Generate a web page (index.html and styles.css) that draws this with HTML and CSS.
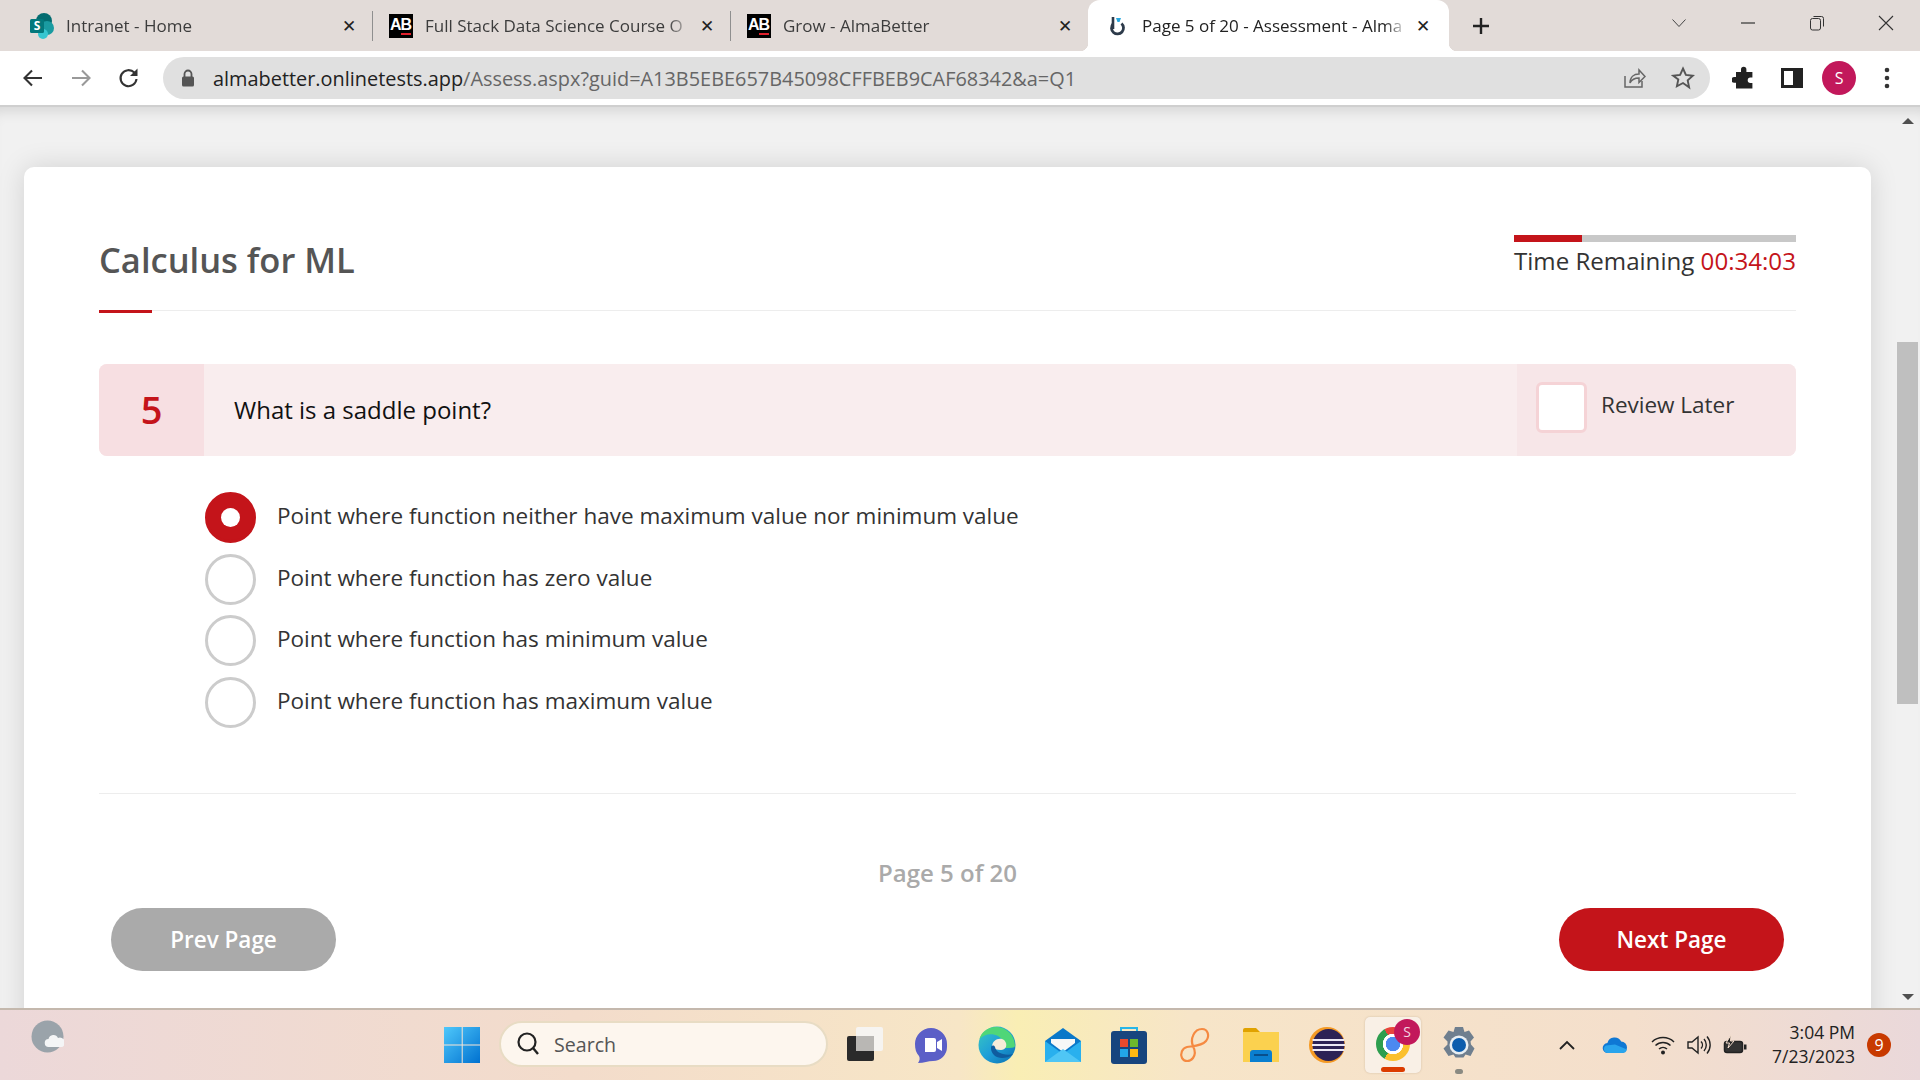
FILE: index.html
```html
<!DOCTYPE html>
<html lang="en">
<head>
  <meta charset="UTF-8">
  <title>Page 5 of 20 - Assessment - AlmaBetter</title>
  <link rel="stylesheet" href="styles.css">
</head>
<body>

  <!-- Browser tabs -->
  <div class="tabstrip">
    <div class="tab">
      <svg class="fav-sp" width="26" height="26" viewBox="0 0 26 26">
        <circle cx="15" cy="8" r="8" fill="#036c70"/>
        <circle cx="18" cy="15" r="7" fill="#1a9ba1"/>
        <circle cx="14" cy="21" r="5" fill="#37c6d0"/>
        <rect x="1" y="6" width="14" height="14" rx="1.5" fill="#03787c"/>
        <text x="8" y="17" text-anchor="middle" class="fav-sp-text">S</text>
      </svg>
      <span class="tab-title">Intranet - Home</span>
      <span class="tab-close">✕</span>
    </div>
    <div class="tab-sep"></div>
    <div class="tab">
      <span class="fav-ab">AB<i></i></span>
      <span class="tab-title">Full Stack Data Science Course O</span>
      <span class="tab-close">✕</span>
    </div>
    <div class="tab-sep"></div>
    <div class="tab">
      <span class="fav-ab">AB<i></i></span>
      <span class="tab-title">Grow - AlmaBetter</span>
      <span class="tab-close">✕</span>
    </div>
    <div class="tab active">
      <svg class="fav-grow" width="18" height="22" viewBox="0 0 18 22">
        <path d="M4 2v12" stroke="#2d3a4a" stroke-width="2.6" fill="none"/>
        <path d="M4 9a6 6 0 1 0 8.5 -.5" stroke="#2d3a4a" stroke-width="2.8" fill="none"/>
        <path d="M7 3h5l-1.5 4h-2z" fill="#29a8e0"/>
      </svg>
      <span class="tab-title">Page 5 of 20 - Assessment - Alma</span>
      <span class="tab-close">✕</span>
    </div>
    <div class="new-tab">
      <svg width="20" height="20" viewBox="0 0 20 20"><path d="M10 2v16M2 10h16" stroke="#222" stroke-width="2.4"/></svg>
    </div>
    <div class="win-controls">
      <div class="win-btn"><svg width="16" height="10" viewBox="0 0 16 10"><path d="M1.5 1.5L8 8.5l6.5-7" fill="none" stroke="#444" stroke-width="1"/></svg></div>
      <div class="win-btn"><svg width="14" height="2" viewBox="0 0 14 2"><path d="M0 1h14" stroke="#333" stroke-width="1.2"/></svg></div>
      <div class="win-btn"><svg width="16" height="16" viewBox="0 0 16 16"><rect x="1.5" y="3.5" width="10" height="11.5" rx="2" fill="none" stroke="#333"/><path d="M4.5 1.5h8a2 2 0 0 1 2 2v8" fill="none" stroke="#333"/></svg></div>
      <div class="win-btn"><svg width="16" height="16" viewBox="0 0 16 16"><path d="M1 1l14 14M15 1L1 15" stroke="#333" stroke-width="1.1"/></svg></div>
    </div>
  </div>

  <!-- Address bar -->
  <div class="toolbar">
    <div class="tool-btn"><svg width="22" height="20" viewBox="0 0 22 20"><path d="M20 10H3M10 2.5L2.5 10l7.5 7.5" fill="none" stroke="#333" stroke-width="2.1"/></svg></div>
    <div class="tool-btn"><svg width="22" height="20" viewBox="0 0 22 20"><path d="M2 10h17M12 2.5l7.5 7.5-7.5 7.5" fill="none" stroke="#999" stroke-width="2.1"/></svg></div>
    <div class="tool-btn"><svg width="22" height="22" viewBox="0 0 22 22"><path d="M18.5 12a8 8 0 1 1-2.2-6.4" fill="none" stroke="#333" stroke-width="2.1"/><path d="M19.5 1.5v7.5h-7.5z" fill="#333"/></svg></div>
    <div class="omnibox">
      <svg class="lock" width="14" height="18" viewBox="0 0 14 18"><path d="M3.5 8V5a3.5 3.5 0 0 1 7 0v3" fill="none" stroke="#555" stroke-width="1.8"/><rect x="1" y="7.5" width="12" height="10" rx="1.5" fill="#555"/></svg>
      <span class="url"><span class="url-host">almabetter.onlinetests.app</span>/Assess.aspx?guid=A13B5EBE657B45098CFFBEB9CAF68342&amp;a=Q1</span>
      <svg class="omni-share" width="24" height="24" viewBox="0 0 24 24"><path d="M3 10v11h17v-6" fill="none" stroke="#666" stroke-width="1.5"/><path d="M8 17c0-6 4-9 9-9V4l6 6.5-6 6V12c-4 0-7 1-9 5z" fill="none" stroke="#666" stroke-width="1.5"/></svg>
      <svg class="omni-star" width="24" height="24" viewBox="0 0 24 24"><path d="M12 2.5l2.9 6.4 7 .8-5.2 4.7 1.4 6.9L12 17l-6.1 3.3 1.4-6.9L2.100 9.700l7-.8z" fill="none" stroke="#555" stroke-width="1.9"/></svg>
    </div>
    <div class="tool-right">
      <div class="tool-btn"><svg width="24" height="24" viewBox="0 0 24 24"><path d="M9 3.500a2.700 2.700 0 0 1 5.400 0V6h6v5.500h-2a2.700 2.700 0 0 0 0 5.400h2v5.600H4v-5.800H2.200a2.800 2.800 0 0 1 0-5.600H4V6h5z" fill="#222"/></svg></div>
      <div class="tool-btn"><svg width="22" height="20" viewBox="0 0 22 20"><rect x="1.500" y="1.500" width="19" height="17" fill="none" stroke="#222" stroke-width="3"/><rect x="12" y="1.500" width="8" height="17" fill="#222"/></svg></div>
      <div class="tool-btn"><span class="avatar">S</span></div>
      <div class="tool-btn"><svg width="6" height="22" viewBox="0 0 6 22"><circle cx="3" cy="3" r="2.300" fill="#333"/><circle cx="3" cy="11" r="2.300" fill="#333"/><circle cx="3" cy="19" r="2.300" fill="#333"/></svg></div>
    </div>
  </div>

  <!-- Page viewport -->
  <div class="viewport">
    <div class="page">
      <div class="card">

        <div class="card-head">
          <h1 class="test-title">Calculus for ML</h1>
          <div class="timer">
            <div class="timer-bar"><div class="timer-fill"></div></div>
            <div class="timer-text">Time Remaining <span class="timer-value">00:34:03</span></div>
          </div>
        </div>
        <div class="head-rule"><span></span></div>

        <div class="question">
          <div class="question-num">5</div>
          <div class="question-text">What is a saddle point?</div>
          <div class="review">
            <span class="review-box"></span>
            <span class="review-label">Review Later</span>
          </div>
        </div>

        <div class="options">
          <div class="option selected"><span class="radio"></span><span class="option-label">Point where function neither have maximum value nor minimum value</span></div>
          <div class="option"><span class="radio"></span><span class="option-label">Point where function has zero value</span></div>
          <div class="option"><span class="radio"></span><span class="option-label">Point where function has minimum value</span></div>
          <div class="option"><span class="radio"></span><span class="option-label">Point where function has maximum value</span></div>
        </div>

        <div class="card-rule"></div>
        <div class="page-count">Page 5 of 20</div>
        <div class="pager">
          <button class="pager-btn prev">Prev Page</button>
          <button class="pager-btn next">Next Page</button>
        </div>

      </div>
    </div>

    <div class="scrollbar">
      <span class="arrow-up"></span>
      <div class="scroll-thumb"></div>
      <span class="arrow-down"></span>
    </div>
  </div>

  <!-- Windows taskbar -->
  <div class="taskbar">
    <svg class="weather" width="33" height="33" viewBox="0 0 33 33">
      <circle cx="16.500" cy="16.500" r="16" fill="#9aa3aa"/>
      <path d="M18 27a4 4 0 0 1-.5-8 5 5 0 0 1 9.500-1 4.500 4.500 0 0 1 4 9z" fill="#f4f5f6"/>
    </svg>

    <div class="task-slot win-logo">
      <svg width="36" height="36" viewBox="0 0 36 36">
        <defs><linearGradient id="winblue" x1="0" y1="0" x2="1" y2="1"><stop offset="0" stop-color="#4fc8fb"/><stop offset="1" stop-color="#0071d0"/></linearGradient></defs>
        <rect width="36" height="36" fill="url(#winblue)"/>
        <path d="M17.700 0h1v36h-1zM0 17.500h36v1H0z" fill="#f7e6d6"/>
      </svg>
    </div>

    <div class="task-search">
      <svg width="24" height="26" viewBox="0 0 24 26"><circle cx="11" cy="11" r="8.500" fill="none" stroke="#222" stroke-width="2.200"/><path d="M17 17l5 6" stroke="#222" stroke-width="2.400"/></svg>
      <span>Search</span>
    </div>

    <div class="task-apps">
      <div class="task-slot">
        <svg width="36" height="36" viewBox="0 0 36 36"><rect x="0" y="9" width="27" height="25" rx="2" fill="#2a2a2a"/><rect x="9" y="0" width="27" height="24" rx="2" fill="#f6f4f1"/><rect x="9" y="9" width="18" height="15" fill="#b9b7b4"/></svg>
      </div>
      <div class="task-slot">
        <svg width="34" height="36" viewBox="0 0 34 36"><path d="M17 1a16 16 0 0 1 16 16v3a14 14 0 0 1-14 14c-5 0-9 2-15 2 2-3 2-5 1-7C2 26 1 22 1 17A16 16 0 0 1 17 1z" fill="#5b5fc7"/><path d="M11 11h9a2 2 0 0 1 2 2v10a2 2 0 0 1-2 2h-9z" fill="#fff"/><path d="M23 15l5-3v12l-5-3z" fill="#fff"/></svg>
      </div>
      <div class="task-slot">
        <svg width="38" height="38" viewBox="0 0 38 38">
          <defs><linearGradient id="edgeg" x1="0" y1="0" x2="1" y2="1"><stop offset="0" stop-color="#39c9c0"/><stop offset=".5" stop-color="#1f9fd8"/><stop offset="1" stop-color="#0a6fb0"/></linearGradient></defs>
          <circle cx="19" cy="19" r="18.500" fill="url(#edgeg)"/>
          <path d="M37 20c0-10-8-19-19-19C9 1 3 7 1.500 13 6 8 14 7 20 10c5 3 7 8 4 12h7c4 0 6-1 6-2z" fill="#4fd678"/>
          <path d="M14 21c0-6 5-9 10-8 3 1 5 4 4 8-1 2-3 3-5 3-4 0-7-1-9-3z" fill="#f7ecd9"/>
          <path d="M13 22c0 6 5 10 11 10 4 0 8-1 11-4-3 1-7 1-10 0-4-1-7-3-8-7-1-2-4-2-4 1z" fill="#0f5c9f"/>
        </svg>
      </div>
      <div class="task-slot">
        <svg width="36" height="34" viewBox="0 0 36 34"><path d="M18 0l18 13v21H0V13z" fill="#0a78c9"/><path d="M0 13l18 13 18-13v21H0z" fill="#29b0ee"/><path d="M6 11h24v4L18 24 6 15z" fill="#f7f7f7"/><path d="M0 34l18-13 18 13z" fill="#4fc6f5"/></svg>
      </div>
      <div class="task-slot">
        <svg width="36" height="38" viewBox="0 0 36 38"><path d="M10 7V2h16v5" fill="none" stroke="#27b6e8" stroke-width="2"/><rect y="5" width="36" height="33" rx="3" fill="#17457e"/><rect x="9" y="13" width="8" height="8" fill="#e8492d"/><rect x="19" y="13" width="8" height="8" fill="#6cb82c"/><rect x="9" y="23" width="8" height="8" fill="#22a6e8"/><rect x="19" y="23" width="8" height="8" fill="#fdb813"/></svg>
      </div>
      <div class="task-slot">
        <svg width="32" height="36" viewBox="0 0 32 36"><path d="M14 19C11 12 15 2 23 2c6 0 8 7 4 12-4 5-13 5-19 6-5 1-7 7-5 11 2 4 8 4 11 0 3-4 2-8 0-12z" fill="none" stroke="#f58a42" stroke-width="2.200"/></svg>
      </div>
      <div class="task-slot">
        <svg width="36" height="34" viewBox="0 0 36 34"><path d="M0 2a2 2 0 0 1 2-2h11l4 4H0z" fill="#e0a200"/><rect y="4" width="36" height="30" fill="#fbd14f"/><path d="M7 34v-9a3 3 0 0 1 3-3h16a3 3 0 0 1 3 3v9z" fill="#0a7fd0"/><rect x="11" y="26" width="14" height="2" fill="#084f8c"/></svg>
      </div>
      <div class="task-slot">
        <svg width="36" height="36" viewBox="0 0 36 36"><circle cx="18" cy="18" r="18" fill="#f59a23"/><circle cx="19.500" cy="18" r="16" fill="#2c2255"/><path d="M3.500 12h32v2h-32zM3 17h33v2H3zM3.500 22h32v2h-32z" fill="#ece9f5"/></svg>
      </div>
      <div class="task-slot running">
        <span class="chrome-logo"></span>
        <span class="chrome-badge">S</span>
        <span class="running-bar"></span>
      </div>
      <div class="task-slot">
        <svg width="36" height="38" viewBox="0 0 36 38"><path d="M14 1h8l1.500 5 4.500-1.500 5 7-3.500 4 .5 3 3.500 4-4 7.500-5-1.500-2 3-8 0-2-3-5 1.500-5-7.500 4-4v-3l-4-4 5-7 5 1.500z" fill="#6f7f8f"/><circle cx="18" cy="19" r="9.500" fill="#e8eef2"/><circle cx="18" cy="19" r="7" fill="#0b5cad"/></svg>
        <span class="open-dot"></span>
      </div>
    </div>

    <div class="tray">
      <div class="tray-slot wide"><svg width="18" height="10" viewBox="0 0 18 10"><path d="M2 9l7-7 7 7" fill="none" stroke="#222" stroke-width="1.800"/></svg></div>
      <div class="tray-slot wide"><svg width="26" height="17" viewBox="0 0 26 17"><path d="M6 16a5 5 0 0 1-.6-10 7.500 7.500 0 0 1 13.800-1.500A6 6 0 0 1 25 10.500 5.500 5.500 0 0 1 20 16z" fill="#0f78d4"/><path d="M6 16a4 4 0 0 1-2-7.500l9-1 12 5a5 5 0 0 1-5 3.500z" fill="#29a4ec"/></svg></div>
      <div class="tray-slot first-sys"><svg width="24" height="20" viewBox="0 0 24 20"><path d="M1 7a16 16 0 0 1 22 0M4.500 10.500a11 11 0 0 1 15 0M8 14a6 6 0 0 1 8 0" fill="none" stroke="#222" stroke-width="1.500"/><circle cx="12" cy="17.500" r="2" fill="#222"/></svg></div>
      <div class="tray-slot"><svg width="24" height="20" viewBox="0 0 24 20"><path d="M1 7h4l6-5v16l-6-5H1z" fill="none" stroke="#222" stroke-width="1.400"/><path d="M14 6.500a5 5 0 0 1 0 7M17 4a9 9 0 0 1 0 12M20 1.500a13 13 0 0 1 0 17" fill="none" stroke="#222" stroke-width="1.400"/></svg></div>
      <div class="tray-slot"><svg width="24" height="20" viewBox="0 0 24 20"><rect x="1.500" y="6.500" width="18" height="11" rx="2.500" fill="#333" stroke="#222" stroke-width="1.500"/><rect x="21" y="9.500" width="2.500" height="5" fill="#222"/><path d="M8 0L3 8h3.500L5 13l6-7H7.500z" fill="#222" stroke="#f5dfcf" stroke-width="1"/></svg></div>
      <div class="clock"><div>3:04 PM</div><div>7/23/2023</div></div>
      <span class="notif">9</span>
    </div>
  </div>

</body>
</html>
```

FILE: styles.css
```css
* {
  margin: 0;
  padding: 0;
  box-sizing: border-box;
}
body {
  font-family: 'Open Sans', sans-serif;
  display: flex;
  flex-direction: column;
  height: 100vh;
  overflow: hidden;
  background-color: #f1f1f1;
  color: #333;
}

/* Browser tabs */
.tabstrip {
  display: flex;
  align-items: center;
  height: 51px;
  padding-left: 14px;
  background-color: #e2dbd8;
  flex-shrink: 0;
}
.tab {
  display: flex;
  align-items: center;
  width: 358px;
  height: 51px;
  padding: 0 14px 0 15px;
  font-family: 'Open Sans', sans-serif;
  font-size: 17px;
  color: #3c3c3c;
}
.tab-title {
  flex: 1;
  margin-left: 12px;
  white-space: nowrap;
  overflow: hidden;
  -webkit-mask-image: linear-gradient(to left, transparent 0, #000 24px);
  mask-image: linear-gradient(to left, transparent 0, #000 24px);
}
.tab-close {
  width: 18px;
  margin-left: 6px;
  text-align: center;
  font-family: 'DejaVu Sans', sans-serif;
  font-size: 17px;
  font-weight: bold;
  color: #222;
}
.tab-sep {
  width: 1px;
  height: 30px;
  background-color: #8f8f8f;
  flex-shrink: 0;
}
.tab-sep + .tab {
  width: 357px;
  padding-left: 16px;
}
.fav-sp {
  margin-right: -1px;
}
.fav-ab {
  position: relative;
  flex-shrink: 0;
  width: 24px;
  height: 24px;
  padding-left: 1px;
  background-color: #000;
  color: #fff;
  font-family: 'Liberation Sans', sans-serif;
  font-size: 16px;
  line-height: 22px;
  font-weight: bold;
  letter-spacing: -1px;
}
.fav-ab i {
  position: absolute;
  right: 2px;
  bottom: 3px;
  width: 10px;
  height: 2px;
  background-color: #e0202c;
}
.fav-sp-text {
  font-family: 'Open Sans', sans-serif;
  font-size: 12px;
  font-weight: bold;
  fill: #fff;
}
.tab.active {
  position: relative;
  width: 361px;
  padding: 0 17px 0 21px;
  background-color: #fff;
  border-radius: 12px 12px 0 0;
  color: #222;
}
.tab.active::before,
.tab.active::after {
  content: "";
  position: absolute;
  bottom: 0;
  width: 8px;
  height: 8px;
}
.tab.active::before {
  left: -8px;
  background: radial-gradient(circle at 0 0, transparent 8px, #fff 8.500px);
}
.tab.active::after {
  right: -8px;
  background: radial-gradient(circle at 100% 0, transparent 8px, #fff 8.500px);
}
.tab.active .tab-title {
  margin-left: 15px;
}
.new-tab {
  display: flex;
  margin-left: 22px;
}
.win-controls {
  display: flex;
  margin-left: auto;
}
.win-btn {
  display: flex;
  align-items: center;
  justify-content: center;
  width: 69px;
  height: 46px;
  margin-top: -5px;
}

/* Address bar */
.toolbar {
  display: flex;
  align-items: center;
  height: 56px;
  padding: 0 8px 0 9px;
  background-color: #fff;
  border-bottom: 2px solid #cfcfcf;
  flex-shrink: 0;
}
.tool-btn {
  display: flex;
  align-items: center;
  justify-content: center;
  width: 48px;
  height: 42px;
}
.omnibox {
  display: flex;
  align-items: center;
  width: 1547px;
  height: 42px;
  margin-left: 10px;
  padding: 0 15px 0 18px;
  background-color: #e0e0e0;
  border-radius: 21px;
}
.url {
  flex: 1;
  margin-left: 18px;
  font-family: 'Open Sans', sans-serif;
  font-size: 19.9px;
  color: #666;
  white-space: nowrap;
}
.url-host {
  color: #222;
}
.omni-star {
  margin-left: 25px;
}
.tool-right {
  display: flex;
  margin-left: 10.500px;
}
.tool-right .tool-btn {
  width: 47.500px;
}
.avatar {
  width: 34px;
  height: 34px;
  border-radius: 50%;
  background-color: #c2185b;
  color: #fff;
  font-size: 16px;
  line-height: 34px;
  text-align: center;
}

/* Page viewport */
.viewport {
  flex: 1;
  display: flex;
  min-height: 0;
  box-shadow: inset 0 14px 14px -10px rgba(0, 0, 0, 0.12);
}
.page {
  flex: 1;
  min-width: 0;
  padding: 60px 26px 0 24px;
  overflow: hidden;
}
.card {
  height: 1000px;
  padding: 68px 75px 0 75px;
  background-color: #fff;
  border-radius: 10px;
  box-shadow: 0 0 28px rgba(0, 0, 0, 0.13);
}
.card-head {
  display: flex;
  justify-content: space-between;
  height: 75px;
}
.test-title {
  margin-top: 2px;
  font-size: 34.500px;
  line-height: 46px;
  font-weight: 600;
  color: #555;
}
.timer {
  width: 282px;
}
.timer-bar {
  height: 7px;
  background-color: #c8c8c8;
}
.timer-fill {
  width: 68px;
  height: 7px;
  background-color: #c4141a;
}
.timer-text {
  margin-top: 1px;
  font-size: 24.100px;
  line-height: 36px;
  white-space: nowrap;
}
.timer-value {
  color: #c4141a;
}
.head-rule {
  height: 1px;
  background-color: #ededed;
}
.head-rule span {
  display: block;
  width: 53px;
  height: 3px;
  background-color: #c4141a;
}

.question {
  display: flex;
  align-items: stretch;
  height: 92px;
  margin-top: 53px;
  background-color: #f9edee;
  border-radius: 8px;
  overflow: hidden;
}
.question-num {
  width: 105px;
  background-color: #f7dfe2;
  color: #c4141a;
  font-size: 38px;
  font-weight: 600;
  line-height: 90px;
  text-align: center;
}
.question-text {
  flex: 1;
  padding-left: 30px;
  font-size: 24px;
  line-height: 92px;
  color: #111;
}
.review {
  display: flex;
  align-items: center;
  width: 279px;
  padding-left: 19px;
  background-color: #f7e6e8;
}
.review-box {
  width: 51px;
  height: 51px;
  background-color: #fff;
  border: 3px solid #f5d3d6;
  border-radius: 6px;
  margin-top: -5px;
}
.review-label {
  margin-left: 14px;
  margin-top: -12px;
  font-size: 22.500px;
}

.options {
  display: flex;
  flex-direction: column;
  gap: 10.600px;
  margin-top: 36px;
  padding-left: 106px;
}
.option {
  display: flex;
  align-items: center;
  height: 51px;
}
.radio {
  display: flex;
  align-items: center;
  justify-content: center;
  width: 51px;
  height: 51px;
  border: 3px solid #ccc;
  border-radius: 50%;
}
.option.selected .radio {
  background-color: #c4141a;
  border-color: #c4141a;
}
.option.selected .radio::after {
  content: "";
  width: 19px;
  height: 19px;
  border-radius: 50%;
  background-color: #fff;
}
.option-label {
  margin-left: 21px;
  margin-top: -4px;
  font-size: 22.500px;
}

.card-rule {
  height: 1px;
  margin-top: 65px;
  background-color: #ededed;
}
.page-count {
  margin-top: 61px;
  font-size: 24px;
  line-height: 36px;
  font-weight: 600;
  text-align: center;
  color: #aaa;
}
.pager {
  display: flex;
  justify-content: space-between;
  margin-top: 17px;
  padding: 0 12px;
}
.pager-btn {
  width: 225px;
  height: 63px;
  border: none;
  border-radius: 32px;
  font-family: 'Open Sans', sans-serif;
  font-size: 22.500px;
  font-weight: 600;
  color: #fff;
}
.pager-btn.prev {
  background-color: #aaa;
}
.pager-btn.next {
  background-color: #c4141a;
}

.scrollbar {
  display: flex;
  flex-direction: column;
  align-items: center;
  width: 23px;
  padding: 11px 2px 8px 0;
  flex-shrink: 0;
}
.arrow-up,
.arrow-down {
  width: 0;
  height: 0;
  border-left: 6px solid transparent;
  border-right: 6px solid transparent;
}
.arrow-up {
  border-bottom: 6px solid #505050;
}
.arrow-down {
  margin-top: auto;
  border-top: 6px solid #505050;
}
.scroll-thumb {
  width: 21px;
  height: 362px;
  margin-top: 218px;
  background-color: #bfbfbf;
}

/* Windows taskbar */
.taskbar {
  display: flex;
  align-items: center;
  height: 72px;
  padding-left: 31px;
  border-top: 2px solid #c4b8ad;
  background: linear-gradient(to right, #ecd8d9 0, #f3dccb 30%, #f7e6c6 50%, #f9eeb4 53%, #f7e5c8 62%, #f4dfcc 85%, #ead8da 100%);
  flex-shrink: 0;
}
.weather {
  margin-top: -18px;
}
.win-logo {
  margin-left: 365px;
}
.task-slot {
  position: relative;
  display: flex;
  align-items: center;
  justify-content: center;
  width: 66px;
  height: 58px;
}
.task-search {
  display: flex;
  align-items: center;
  gap: 14px;
  width: 329px;
  height: 46px;
  margin-left: 4px;
  margin-top: -2px;
  padding-left: 15px;
  background-color: #fdf6ee;
  border: 2px solid #e8dcc4;
  border-radius: 23px;
  font-family: 'Open Sans', sans-serif;
  font-size: 19.600px;
  color: #555;
}
.task-apps {
  display: flex;
  margin-left: 4px;
}
.task-slot.running::before {
  content: "";
  position: absolute;
  left: 5px;
  top: 1px;
  width: 56px;
  height: 56px;
  background-color: #f9f0e6;
  border-radius: 5px;
  box-shadow: 0 0 2px rgba(120, 90, 60, 0.3);
}
.chrome-logo {
  position: relative;
  width: 34px;
  height: 34px;
  margin-top: -2px;
  border-radius: 50%;
  background: radial-gradient(circle, #4b89f0 0 7px, #fff 7.500px 10px, transparent 10.500px), conic-gradient(from 330deg, #e8453c 0 120deg, #fbc02d 120deg 240deg, #2e9e4f 240deg 360deg);
}
.chrome-badge {
  position: absolute;
  left: 34px;
  top: 3px;
  width: 26px;
  height: 26px;
  border-radius: 50%;
  background-color: #c2185b;
  color: #f4d6e2;
  font-size: 14px;
  line-height: 26px;
  text-align: center;
}
.running-bar {
  position: absolute;
  left: 21px;
  bottom: 2px;
  width: 24px;
  height: 5px;
  border-radius: 3px;
  background-color: #dc3c00;
}
.open-dot {
  position: absolute;
  left: 29px;
  bottom: 0;
  width: 8px;
  height: 5px;
  border-radius: 3px;
  background-color: #8a8a82;
}
.tray {
  display: flex;
  align-items: center;
  margin-left: 51px;
}
.tray-slot {
  display: flex;
  align-items: center;
  justify-content: center;
  width: 36px;
}
.tray-slot.wide {
  width: 48px;
}
.tray-slot.first-sys {
  margin-left: 6px;
}
.clock {
  width: 102px;
  margin-top: -2px;
  font-family: 'Open Sans', sans-serif;
  font-size: 17.500px;
  line-height: 24px;
  text-align: right;
  color: #222;
}
.notif {
  width: 24px;
  height: 24px;
  margin-left: 12px;
  border-radius: 50%;
  background-color: #c83a00;
  color: #fff;
  font-size: 16px;
  line-height: 24px;
  text-align: center;
}
```
